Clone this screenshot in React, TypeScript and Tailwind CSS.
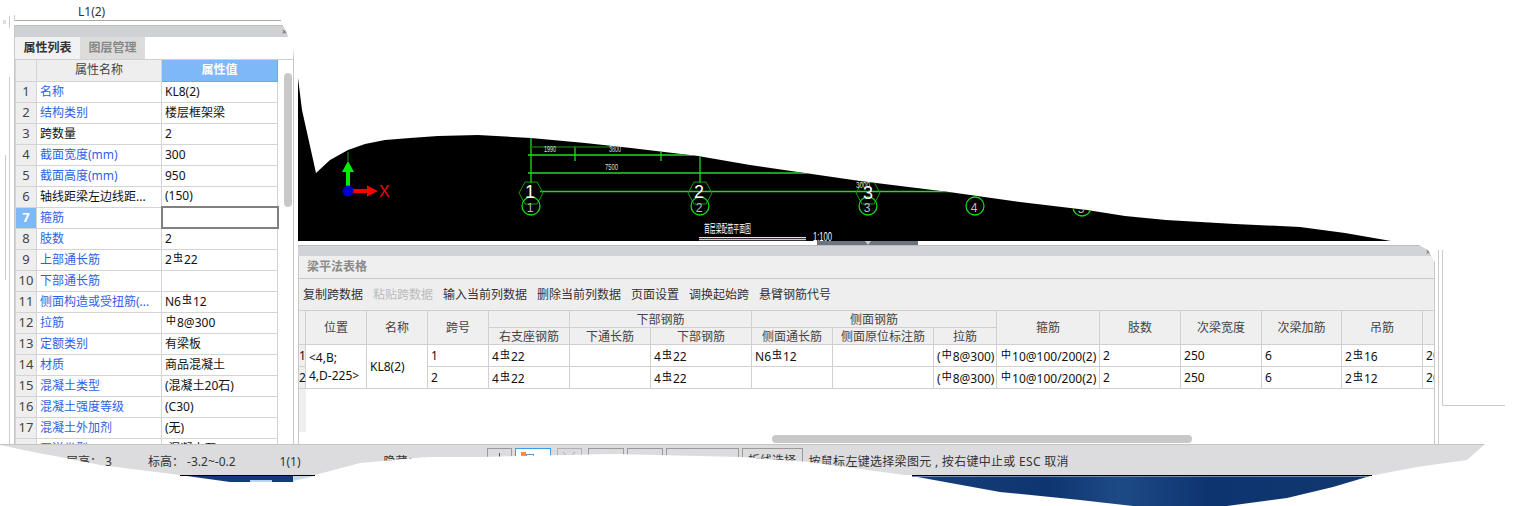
import React from 'react';

const uiFont = "font-['Noto_Sans','Noto_Sans_CJK_SC',sans-serif]";

const props: [string, string, boolean?][] = [
  ['名称', 'KL8(2)'],
  ['结构类别', '楼层框架梁'],
  ['跨数量', '2', true],
  ['截面宽度(mm)', '300'],
  ['截面高度(mm)', '950'],
  ['轴线距梁左边线距...', '(150)', true],
  ['箍筋', ''],
  ['肢数', '2'],
  ['上部通长筋', '2虫22'],
  ['下部通长筋', ''],
  ['侧面构造或受扭筋(...', 'N6虫12'],
  ['拉筋', '中8@300'],
  ['定额类别', '有梁板'],
  ['材质', '商品混凝土'],
  ['混凝土类型', '(混凝土20石)'],
  ['混凝土强度等级', '(C30)'],
  ['混凝土外加剂', '(无)'],
  ['泵送类型', '(混凝土泵)'],
];

const toolbar = ['复制跨数据', '粘贴跨数据', '输入当前列数据', '删除当前列数据', '页面设置', '调换起始跨', '悬臂钢筋代号'];

const colWidths = [7, 61, 61, 61, 81, 81, 101, 81, 101, 63, 103, 81, 81, 80, 81, 81];

const spanRows = [
  ['4虫22', '', '4虫22', 'N6虫12', '', '(中8@300)', '中10@100/200(2)', '2', '250', '6', '2虫16', '200'],
  ['4虫22', '', '4虫22', '', '', '(中8@300)', '中10@100/200(2)', '2', '250', '6', '2虫12', '200'],
];

// steel grade symbols sit raised and smaller than the digits around them
const Rebar = ({ text }: { text: string }) => (
  <>
    {text.split(/([虫中])/).map((part, i) =>
      part === '虫' || part === '中' ? (
        <span key={i} className="text-[10px] align-[3px] mx-px text-black">
          {part}
        </span>
      ) : (
        <span key={i}>{part}</span>
      ),
    )}
  </>
);

const PropertyPanel = () => (
  <div className="ml-[14px] w-[280px] flex-1 border-x border-[#c8c8c8] flex flex-col min-h-0">
    <div className="h-[12px] bg-[#d0d1d5] border-t border-[#bdbdbd] flex items-center justify-end pr-[6px] text-[9px] leading-none text-[#666]">
      ×
    </div>
    <div className="h-[23px] flex border-b border-[#cfcfcf] text-[12px] font-bold">
      <div className="w-[65px] bg-[#f2f2f2] flex items-center justify-center text-[#333]">属性列表</div>
      <div className="w-[65px] bg-[#dcdcdc] flex items-center justify-center text-[#888]">图层管理</div>
    </div>
    <div className="flex flex-1 min-h-0 overflow-hidden">
      <table className="table-fixed border-collapse w-[262px] h-fit text-[12px]">
        <colgroup>
          <col className="w-[21px]" />
          <col className="w-[125px]" />
          <col className="w-[116px]" />
        </colgroup>
        <thead>
          <tr className="h-[21px]">
            <th className="bg-[#eeeeee] border border-t-0 border-[#d4d4d4]" />
            <th className="bg-[#eeeeee] border border-t-0 border-[#d4d4d4] font-normal text-[#444]">属性名称</th>
            <th className="bg-[#7eb8f8] border border-t-0 border-[#6aa8ee] font-bold text-white">属性值</th>
          </tr>
        </thead>
        <tbody>
          {props.map(([name, value, plain], i) => (
            <tr key={i} className="h-[21px]">
              <td
                className={
                  i === 6
                    ? 'bg-[#7eb8f8] border border-[#d4d4d4] p-0 text-center text-[13px] font-bold text-white'
                    : 'bg-[#eeeeee] border border-[#d4d4d4] p-0 text-center text-[13px] text-[#444]'
                }
              >
                {i + 1}
              </td>
              <td className={`border border-[#d4d4d4] p-0 pl-[3px] whitespace-nowrap overflow-hidden ${plain ? 'text-[#111]' : 'text-[#2f5fe8]'}`}>
                {name}
              </td>
              <td
                className={
                  i === 6
                    ? 'border-2 border-[#808080] p-0'
                    : 'border border-[#d4d4d4] p-0 pl-[3px] whitespace-nowrap overflow-hidden text-[#111]'
                }
              >
                <Rebar text={value} />
              </td>
            </tr>
          ))}
        </tbody>
      </table>
      <div className="pl-[5px] pt-[13px]">
        <div className="w-[8px] h-[134px] rounded-full bg-[#c8c8c8]" />
      </div>
    </div>
  </div>
);

const th = 'border border-[#d0d0d0] bg-[#efefef] font-normal text-[#444] p-0 whitespace-nowrap overflow-hidden leading-[15px]';
const td = 'border border-[#d0d0d0] p-0 pl-[3px] text-[#111] whitespace-nowrap overflow-hidden leading-[18px]';

const BeamTable = () => (
  <div className="flex-1 bg-white border-x border-[#c8c8c8] overflow-hidden flex flex-col">
    <table className="table-fixed border-collapse w-[1185px] -ml-px text-[12px] border-t border-[#c8c8c8]">
      <colgroup>
        {colWidths.map((w, i) => (
          <col key={i} style={{ width: w }} />
        ))}
      </colgroup>
      <thead>
        <tr className="h-[17px]">
          <th rowSpan={2} className={th} />
          <th rowSpan={2} className={th}>位置</th>
          <th rowSpan={2} className={th}>名称</th>
          <th rowSpan={2} className={th}>跨号</th>
          <th className={th} />
          <th colSpan={2} className={th}>下部钢筋</th>
          <th colSpan={3} className={th}>侧面钢筋</th>
          <th rowSpan={2} className={th}>箍筋</th>
          <th rowSpan={2} className={th}>肢数</th>
          <th rowSpan={2} className={th}>次梁宽度</th>
          <th rowSpan={2} className={th}>次梁加筋</th>
          <th rowSpan={2} className={th}>吊筋</th>
          <th rowSpan={2} className={th} />
        </tr>
        <tr className="h-[17px]">
          <th className={th}>右支座钢筋</th>
          <th className={th}>下通长筋</th>
          <th className={th}>下部钢筋</th>
          <th className={th}>侧面通长筋</th>
          <th className={th}>侧面原位标注筋</th>
          <th className={th}>拉筋</th>
        </tr>
      </thead>
      <tbody>
        {spanRows.map((row, r) => (
          <tr key={r} className="h-[21px]">
            <td className="border border-[#d0d0d0] bg-[#efefef] p-0 text-[#111] leading-[18px]">{r + 1}</td>
            {r === 0 && (
              <td rowSpan={2} className="border border-[#d0d0d0] p-0 pl-[3px] leading-[18px] text-[#111]">
                &lt;4,B;
                <br />
                4,D-225&gt;
              </td>
            )}
            {r === 0 && (
              <td rowSpan={2} className={td}>
                KL8(2)
              </td>
            )}
            <td className={td}>{r + 1}</td>
            {row.map((cell, c) => (
              <td key={c} className={td}>
                <Rebar text={cell} />
              </td>
            ))}
          </tr>
        ))}
      </tbody>
    </table>
    <div className="w-[7px] h-[43px] bg-[#efefef]" />
    <div className="ml-[473px] mt-[3px] w-[420px] h-[8px] rounded-full bg-[#c8c8c8]" />
  </div>
);

const BeamPanel = () => (
  <div className="w-[1137px] flex-1 flex flex-col min-h-0">
    <div className="h-[11px] bg-[#d2d3d8] border-t border-[#bdbdbd] flex items-center justify-end pr-[4px] text-[9px] leading-none text-[#666]">
      ×
    </div>
    <div className="h-[23px] bg-[#efefef] border-x border-b border-[#c8c8c8] flex items-center pl-[8px] text-[12px] font-bold text-[#8a8a8a]">
      梁平法表格
    </div>
    <div className="h-[31px] bg-[#eeeeee] border-x border-[#c8c8c8] flex items-center gap-[10px] pl-[4px] text-[12px] text-[#333]">
      {toolbar.map((label, i) => (
        <span key={label} className={i === 1 ? 'text-[#bbbbbb]' : ''}>
          {label}
        </span>
      ))}
    </div>
    <BeamTable />
  </div>
);

const beamAxes: [number, number, string][] = [
  [531, 206, '1'],
  [700, 206, '2'],
  [868, 206, '3'],
  [975, 206, '4'],
  [1082, 207, '5'],
];

const hexagon = (x: number, y: number) =>
  [
    [x - 12, y],
    [x - 6, y - 11],
    [x + 6, y - 11],
    [x + 12, y],
    [x + 6, y + 11],
    [x - 6, y + 11],
  ]
    .map((p) => p.join(','))
    .join(' ');

const blackShape =
  'M298 78 L302 110 L316 173 L330 160 L348 150 L365 144 L385 140 L410 138 L438 136 L478 135 L531 138 L585 143 L631 148 L698 156 L750 165 L798 172 L860 181 L949 192 L1020 202 L1087 210 L1125 216 L1166 220 L1235 224 L1300 227 L1345 233 L1391 241 L298 241 Z';

// the drawing shown in the CAD viewport
const CadCanvas = () => (
  <svg viewBox="298 0 1227 241" className="block w-[1227px] h-[241px]">
    <defs>
      <clipPath id="drawing">
        <path d={blackShape} />
      </clipPath>
    </defs>
    <path d={blackShape} fill="#000" />
    <g clipPath="url(#drawing)">
      <g stroke="#1fdc1f" strokeWidth="1.3" fill="none">
        <path d="M531 130V183M700 130V183M575 146V161M661 150V161" />
        <path d="M528 155H830M528 173H900M540 191.500H1000" />
      </g>
      <path d="M531 147H612" stroke="#0b6a0b" strokeWidth="1.5" />
      <polygon points={hexagon(531, 193)} fill="none" stroke="#0ba00b" />
      <polygon points={hexagon(700, 193)} fill="none" stroke="#0ba00b" />
      <polygon points={hexagon(868, 193)} fill="none" stroke="#0ba00b" />
      {beamAxes.map(([x, y, label]) => (
        <g key={label}>
          <circle cx={x} cy={y} r="9" fill="none" stroke="#18d818" strokeWidth="1.3" />
          <text x={x - 1} y={y + 6} textAnchor="middle" fontSize="12" fontFamily="Liberation Sans" fill="#bdbdbd">
            {label}
          </text>
        </g>
      ))}
      <g fill="#fff" fontFamily="Liberation Sans" fontSize="18" textAnchor="middle">
        <text x="530" y="198">1</text>
        <text x="699" y="198">2</text>
        <text x="868" y="199">3</text>
      </g>
      <g fill="#ddd" fontFamily="Liberation Sans" fontSize="9">
        <text x="544" y="152" textLength="12" lengthAdjust="spacingAndGlyphs">1990</text>
        <text x="609" y="152" textLength="12" lengthAdjust="spacingAndGlyphs">3800</text>
        <text x="605" y="170" textLength="13" lengthAdjust="spacingAndGlyphs">7500</text>
        <text x="856" y="188" textLength="14" lengthAdjust="spacingAndGlyphs">3000</text>
      </g>
    </g>
    {/* XY axis marker */}
    <path d="M348 186V170" stroke="#00ee00" strokeWidth="4" />
    <path d="M348 161l-6 11h12z" fill="#00ee00" />
    <path d="M348 161V152" stroke="#0c8a0c" strokeWidth="1.2" />
    <path d="M352 191H367" stroke="#ff0000" strokeWidth="4" />
    <path d="M378 191l-11-5.500v11z" fill="#ff0000" />
    <circle cx="348" cy="191" r="5.500" fill="#0000c8" />
    <text x="379" y="197" fontSize="16" fontFamily="Liberation Sans" fill="#ff0000">X</text>
    {/* title block */}
    <text x="704" y="233" fontSize="11" fill="#fff" fontFamily="Noto Sans CJK SC" textLength="47" lengthAdjust="spacingAndGlyphs">首层梁配筋平面图</text>
    <path d="M699 237.500H806" stroke="#ffff33" strokeWidth="1" />
    <path d="M699 239.500H806" stroke="#cfcfcf" strokeWidth="1.500" />
    <text x="813" y="241" fontSize="13" fill="#fff" fontFamily="Liberation Sans" textLength="19" lengthAdjust="spacingAndGlyphs">1:100</text>
  </svg>
);

const StatusButton = ({ className, children }: { className: string; children?: React.ReactNode }) => (
  <div className={`h-[26px] border flex justify-center ${className}`}>{children}</div>
);

const StatusBar = () => (
  <div className="h-[31px] bg-[#dcdcde] border-t border-[#c4c4c4] flex text-[12px] text-[#333] leading-none">
    <span className="ml-[66px] mt-[11px]">层高：&nbsp;3</span>
    <span className="ml-[36px] mt-[11px]">标高：&nbsp;-3.2~-0.2</span>
    <span className="ml-[44px] mt-[11px]">1(1)</span>
    <span className="ml-[83px] mt-[11px]">隐藏：&nbsp;6</span>
    <div className="ml-[57px] mt-[3px] flex gap-[3px] items-start">
      <StatusButton className="w-[25px] border-[#9a9a9a]">
        <div className="w-px h-[8px] mt-[4px] bg-[#555]" />
      </StatusButton>
      <StatusButton className="w-[36px] border-[#3d9be9] bg-white">
        <div className="flex -ml-[10px] mt-[3px]">
          <div className="w-[5px] h-[5px] bg-[#f0913a]" />
          <div className="w-[8px] h-[8px] mt-[2px] border border-[#6f8fb0]" />
        </div>
      </StatusButton>
      <StatusButton className="w-[25px] ml-[3px] border-[#b0b0b0]">
        <svg width="16" height="10" viewBox="0 0 16 10" className="mt-[2px]">
          <path d="M2 1l5 6M14 1L9 7" stroke="#aaa" fill="none" />
        </svg>
      </StatusButton>
      <StatusButton className="w-[36px] ml-[3px] border-[#9a9a9a]">
        <div className="w-[3px] h-[3px] mt-[7px] bg-[#555]" />
      </StatusButton>
      <StatusButton className="w-[36px] border-[#9a9a9a]" />
      <StatusButton className="w-[73px] border-[#9a9a9a]" />
      <StatusButton className="w-[61px] border-[#9a9a9a] items-center text-[#333]">折线选择</StatusButton>
    </div>
    <span className="ml-[6px] mt-[11px] whitespace-nowrap tracking-[0.3px]">按鼠标左键选择梁图元 , 按右键中止或 ESC 取消</span>
  </div>
);

const App: React.FC = () => {
  return (
    <div className={`relative w-[1525px] h-[506px] bg-white overflow-hidden ${uiFont}`}>
      <div className="flex h-[444px] overflow-hidden">
        <div className="w-[298px] flex flex-col shrink-0">
          <div className="ml-[14px] w-[267px] h-[21px] border-b border-[#a8a8a8] pl-[64px] text-[12px] leading-[24px] text-[#333]">
            L1(2)
          </div>
          <div className="h-[4px]" />
          <PropertyPanel />
        </div>
        <div className="flex-1 flex flex-col min-w-0">
          <CadCanvas />
          <div className="h-[4px]">
            <div className="ml-[519px] w-[101px] h-[4px] bg-[#6b7580] flex justify-center">
              <div className="w-0 h-0 border-x-[3px] border-t-[4px] border-x-transparent border-t-[#c8ccd0]" />
            </div>
          </div>
          <BeamPanel />
        </div>
      </div>
      <StatusBar />

      {/* torn screenshot edges and stray window borders, over everything else */}
      <svg viewBox="0 0 1525 506" className="absolute inset-0 w-[1525px] h-[506px] pointer-events-none">
        <defs>
          <linearGradient id="wall" x1="912" x2="1370" y1="0" y2="0" gradientUnits="userSpaceOnUse">
            <stop offset="0" stopColor="#163f7a" />
            <stop offset="0.3" stopColor="#0f3570" />
            <stop offset="0.45" stopColor="#1d4a85" />
            <stop offset="0.65" stopColor="#0e3470" />
            <stop offset="1" stopColor="#12386f" />
          </linearGradient>
        </defs>
        <path
          d="M0 445 L33 452 L65 458 L100 465 L180 475 L315 475 L360 463 L427 457 L480 457 L614 454 L740 457 L809 462 L912 476 L1370 476 L1417 467 L1467 460 L1485 444 L1525 444 L1525 506 L0 506 Z"
          fill="#fff"
        />
        <path d="M180 475.500H315M912 475.500H1372" stroke="#000" />
        <path d="M187 476 L230 482 L293 482 L293 476 Z" fill="#12397a" />
        <path d="M293 476 L315 476 L293 481 Z" fill="#c8d8e8" />
        <rect x="250" y="480" width="22" height="2" fill="#b8d4ee" />
        <path d="M912 476 L1000 492 L1080 500 L1133 506 L1227 506 L1287 498 L1333 487 L1370 476 Z" fill="url(#wall)" />
        <path d="M912 476.500H1368" stroke="#6d8db5" />
        <path d="M282 24 L287 33 L293 58 L296 24 Z" fill="#fff" />
        <path d="M1417 244 L1428 250 L1435 262 L1437 244 Z" fill="#fff" />
        <g stroke="#cccccc" fill="none">
          <path d="M14.500 15V21M9.500 16V28M9.500 77V444M5.500 155V280" />
          <path d="M1438.500 250V444M1442.500 250V405.500H1505" />
        </g>
        <rect x="3" y="20" width="3" height="4" fill="#dddddd" />
      </svg>
    </div>
  );
};

export default App;
